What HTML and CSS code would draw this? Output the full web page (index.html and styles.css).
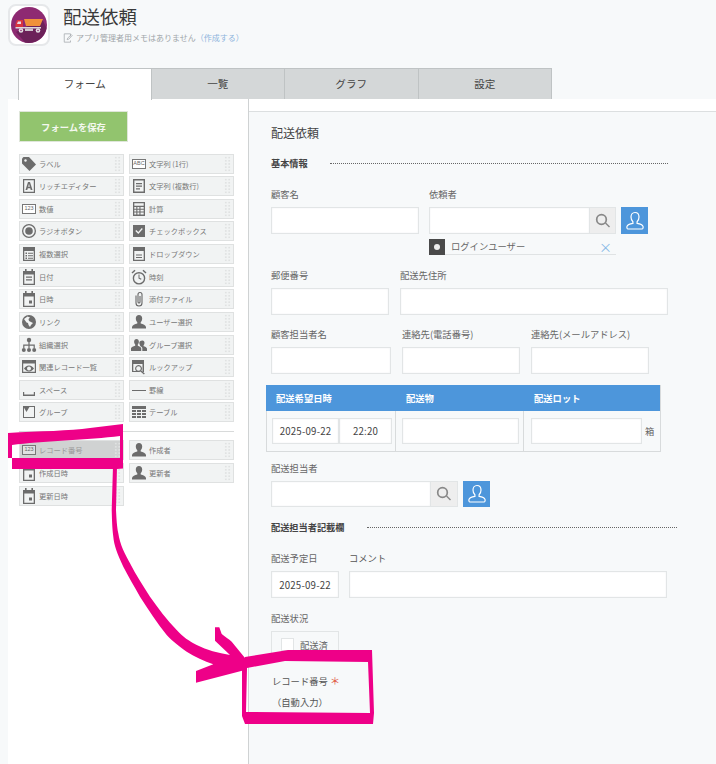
FILE: index.html
```html
<!DOCTYPE html>
<html lang="ja">
<head>
<meta charset="utf-8">
<title>配送依頼</title>
<link rel="stylesheet" href="styles.css">
</head>
<body>
<svg class="defs" width="0" height="0" aria-hidden="true">
  <defs>
    <symbol id="i-tag" viewBox="0 0 16 16"><path d="M1 2.500 2.500 1H8l7 7.500-6.500 6.500L1 7.500Z"/><circle cx="4.500" cy="4.500" r="1.200" fill="#f1f3f3"/></symbol>
    <symbol id="i-rich" viewBox="0 0 16 16"><path fill-rule="evenodd" d="M2 1h12v14H2Zm1.200 1.200v11.600h9.600V2.200Z"/><path d="M7 4h2l2.500 8H9.700l-.5-1.700H6.800L6.300 12H4.500Zm1 1.800-.8 3h1.600Z"/></symbol>
    <symbol id="i-text" viewBox="0 0 16 16"><path fill-rule="evenodd" d="M2 1h12v14H2Zm1.400 1.400v11.200h9.200V2.400Z"/><path d="M5 5h6v1.200H5Zm0 2.600h6v1.200H5Zm0 2.600h4v1.200H5Z"/></symbol>
    <symbol id="i-calc" viewBox="0 0 16 16"><path fill-rule="evenodd" d="M2 1h12v14H2Zm1.300 1.300v2.400h9.400V2.300ZM3.300 6v1.800h2V6Zm3.100 0v1.800h2V6Zm3.100 0v1.800h3.200V6ZM3.300 8.800v1.800h2V8.800Zm3.100 0v1.800h2V8.800Zm3.100 0v1.800h3.200V8.800ZM3.300 11.600v2h2v-2Zm3.100 0v2h2v-2Zm3.100 0v2h3.200v-2Z"/></symbol>
    <symbol id="i-radio" viewBox="0 0 16 16"><path fill-rule="evenodd" d="M8 1a7 7 0 1 1 0 14A7 7 0 0 1 8 1Zm0 1.300a5.700 5.700 0 1 0 0 11.400A5.700 5.700 0 0 0 8 2.300Z"/><circle cx="8" cy="8" r="3.800"/></symbol>
    <symbol id="i-check" viewBox="0 0 16 16"><path d="M2 2h12v12H2Z"/><path d="m4.300 8 1-1 2 2 3.500-4 1 1-4.500 5Z" fill="#f1f3f3"/></symbol>
    <symbol id="i-multi" viewBox="0 0 16 16"><path fill-rule="evenodd" d="M2 1h12v14H2Zm1.300 4v8.700h9.400V5Z"/><path d="M4.500 6.500H6V8H4.500ZM7 6.700h5v1H7ZM4.500 9H6v1.500H4.500ZM7 9.200h5v1H7ZM4.500 11.500H6V13H4.500ZM7 11.700h5v1H7Z"/></symbol>
    <symbol id="i-drop" viewBox="0 0 16 16"><path fill-rule="evenodd" d="M2 1h12v14H2Zm1.300 4v8.700h9.400V5Z"/><path d="M5 8.500h6v1H5Zm0 2.500h6v1H5Z"/></symbol>
    <symbol id="i-date" viewBox="0 0 16 16"><path fill-rule="evenodd" d="M4 0h1.600v2h4.800V0H12v2h2v14H2V2h2Zm-.7 5.500v9.200h9.400V5.500Z"/><path d="M5 7.500h6v1.200H5Zm0 2.700h6v1.200H5Z"/></symbol>
    <symbol id="i-datetime" viewBox="0 0 16 16"><path fill-rule="evenodd" d="M4 0h1.600v2h4.800V0H12v2h2v14H2V2h2Zm-.7 5.500v9.200h9.400V5.500Z"/><path d="M8 9.500h3v3H8Z"/></symbol>
    <symbol id="i-clock" viewBox="0 0 16 16"><path fill-rule="evenodd" d="M8 3a6.300 6.300 0 1 1 0 12.600A6.300 6.300 0 0 1 8 3Zm0 1.400a4.900 4.900 0 1 0 0 9.800 4.900 4.900 0 0 0 0-9.800Z"/><path d="M7.500 5.500h1v3.300l2 1-.5 1-2.500-1.300ZM.5 3.500 3.500.8l1 1-3 2.800Zm15 0L12.500.8l-1 1 3 2.800Z"/></symbol>
    <symbol id="i-clip" viewBox="0 0 16 16"><path fill="none" stroke="#666" stroke-width="1.100" d="M5 4.500V12a3 3 0 0 0 6 0V3.500a2 2 0 0 0-4 0V11a1 1 0 0 0 2 0V5"/></symbol>
    <symbol id="i-globe" viewBox="0 0 16 16"><path fill-rule="evenodd" d="M8 1a7 7 0 1 1 0 14A7 7 0 0 1 8 1ZM3 5l2.500 3.500L7 9l.5 2L9 13l1-2 2-2-2-1-2-1-.5-2L9 3.500 6.500 2.500Z"/></symbol>
    <symbol id="i-user" viewBox="0 0 16 16"><path d="M8 1c2 0 3.200 1.500 3.200 3.500 0 1.500-.7 3-1.500 3.700v1.400c2.300.5 5 1.500 5.300 3.400v1.500H1v-1.500c.3-1.900 3-2.900 5.300-3.400V8.200C5.500 7.500 4.800 6 4.800 4.500 4.800 2.500 6 1 8 1Z"/></symbol>
    <symbol id="i-org" viewBox="0 0 16 16"><circle cx="8" cy="3" r="2.200"/><circle cx="2.800" cy="13" r="2"/><circle cx="8" cy="13" r="2"/><circle cx="13.200" cy="13" r="2"/><path d="M7.400 5h1.200v2.500h5.200V11h-1.200V8.700H8.600V11H7.400V8.700H3.400V11H2.200V7.500h5.200Z"/></symbol>
    <symbol id="i-group" viewBox="0 0 16 16"><path d="M5.500 2c1.500 0 2.400 1.200 2.400 2.800 0 1.100-.5 2.200-1.100 2.800v1.100c1.500.4 3.200 1.200 3.400 2.600V14H0v-2.700c.2-1.400 2.300-2.200 4.200-2.600V7.600c-.6-.6-1.100-1.700-1.100-2.800C3.100 3.200 4 2 5.500 2Z"/><path d="M11.500 3.500c1.300 0 2 1 2 2.400 0 1-.4 1.800-.9 2.300v1c1.400.3 3 1 3.400 2.300V14h-4.700v-2.800c0-1-1.100-1.800-2.200-2.300v-.7c-.5-.5-.8-1.400-.8-2.300 0-1.400.9-2.400 3.200-2.400Z"/></symbol>
    <symbol id="i-rel" viewBox="0 0 16 16"><path fill-rule="evenodd" d="M1 1h14v13H1Zm1.200 3.500v8.300h11.600V4.500Z"/><path fill-rule="evenodd" d="M8 6.500c2.300 0 4 1.500 5 3-1 1.500-2.700 3-5 3s-4-1.500-5-3c1-1.500 2.700-3 5-3Zm0 1a2 2 0 1 0 0 4 2 2 0 0 0 0-4Z"/></symbol>
    <symbol id="i-look" viewBox="0 0 16 16"><path d="M1 1h12v12h-1.500V5H2.300v7H7v1H1Z"/><path fill-rule="evenodd" d="M7.500 6a3.500 3.500 0 0 1 2.800 5.600l3.500 3-.9 1-3.500-3.100A3.500 3.500 0 1 1 7.500 6Zm0 1.200a2.300 2.300 0 1 0 0 4.600 2.300 2.300 0 0 0 0-4.600Z"/></symbol>
    <symbol id="i-space" viewBox="0 0 16 16"><path d="M2 10h1.200v2.500h9.600V10H14v4H2Z"/></symbol>
    <symbol id="i-line" viewBox="0 0 16 16"><path d="M1 8h14v1H1Z"/></symbol>
    <symbol id="i-box" viewBox="0 0 16 16"><path fill-rule="evenodd" d="M2 2h12v12H2Zm1 1v10h10V3Z"/><path d="M2 2h7L5.500 8Z"/></symbol>
    <symbol id="i-table" viewBox="0 0 16 16"><path d="M1 2h14v3H1Z"/><path d="M1 6h4v2H1Zm5 0h4v2H6Zm5 0h4v2h-4ZM1 9h4v2H1Zm5 0h4v2H6Zm5 0h4v2h-4ZM1 12h4v2H1Zm5 0h4v2H6Zm5 0h4v2h-4Z"/></symbol>
    <symbol id="i-search" viewBox="0 0 16 16"><circle cx="6.500" cy="6.500" r="4.800" fill="none" stroke="#888" stroke-width="1.700"/><path d="m10 10.400 1-1 4 4.100-1 1Z" fill="#888"/></symbol>
    <symbol id="i-outline" viewBox="0 0 20 20"><path fill="none" stroke="#fff" stroke-width="1.200" d="M10 1.500c2.600 0 4 2 4 4.600 0 2-.9 3.800-1.900 4.700v1.600c2.500.4 5.300 1.200 5.900 3 .3 1 0 2.600-1 2.600H3c-1 0-1.300-1.600-1-2.600.6-1.800 3.400-2.600 5.900-3v-1.600C6.900 9.900 6 8.100 6 6.100c0-2.600 1.400-4.600 4-4.600Z"/></symbol>
  </defs>
</svg>

<header class="head">
  <div class="app-icon">
    <svg viewBox="0 0 36 36" width="36" height="36">
      <circle cx="18" cy="18" r="18" fill="#8e2a72"/>
      <path d="M31 12 35.500 21A18 18 0 0 1 14 35.500L5 25Z" fill="#6c2159"/>
      <path d="M13 12H32L29 19H15Z" fill="#f0913a"/>
      <path d="M6 13h6v7H4.500v-3Z" fill="#d9343f"/>
      <path d="M7 14.500h3V17H6Z" fill="#e8d9e4"/>
      <path d="M4.500 20H30v1.500H4.500Z" fill="#ddd8dc"/>
      <path d="M14 21.500h8V24h-8Z" fill="#cfc7cd"/>
      <circle cx="10" cy="23.500" r="2.300" fill="#e2dee1"/>
      <circle cx="27" cy="23.500" r="2.300" fill="#e2dee1"/>
      <circle cx="10" cy="23.500" r=".8" fill="#8e2a72"/>
      <circle cx="27" cy="23.500" r=".8" fill="#8e2a72"/>
    </svg>
  </div>
  <div class="head-text">
    <h1 class="app-name">配送依頼</h1>
    <p class="memo">
      <svg class="memo-icon" viewBox="0 0 12 12" width="10" height="10"><path fill="none" stroke="#a9aeb2" d="M9 4V1H1.500v10H9V9"/><path fill="none" stroke="#a9aeb2" d="m5 8 .5-1.800L10 2l1 1-4.200 4.500Z"/></svg>
      <span>アプリ管理者用メモはありません<span class="memo-link">（作成する）</span></span>
    </p>
  </div>
</header>

<nav class="tabs">
  <div class="tab tab-active">フォーム</div>
  <div class="tab">一覧</div>
  <div class="tab">グラフ</div>
  <div class="tab">設定</div>
</nav>

<main class="panel">
  <aside class="side">
    <button class="save">フォームを保存</button>
    <div class="palette">
      <div class="item"><svg class="ic"><use href="#i-tag"/></svg><span>ラベル</span><i class="grip"></i></div>
      <div class="item"><span class="ic-box ic-abc">ABC</span><span>文字列 (1行)</span><i class="grip"></i></div>
      <div class="item"><svg class="ic"><use href="#i-rich"/></svg><span>リッチエディター</span><i class="grip"></i></div>
      <div class="item"><svg class="ic"><use href="#i-text"/></svg><span>文字列 (複数行)</span><i class="grip"></i></div>
      <div class="item"><span class="ic-box">123</span><span>数値</span><i class="grip"></i></div>
      <div class="item"><svg class="ic"><use href="#i-calc"/></svg><span>計算</span><i class="grip"></i></div>
      <div class="item"><svg class="ic"><use href="#i-radio"/></svg><span>ラジオボタン</span><i class="grip"></i></div>
      <div class="item"><svg class="ic"><use href="#i-check"/></svg><span>チェックボックス</span><i class="grip"></i></div>
      <div class="item"><svg class="ic"><use href="#i-multi"/></svg><span>複数選択</span><i class="grip"></i></div>
      <div class="item"><svg class="ic"><use href="#i-drop"/></svg><span>ドロップダウン</span><i class="grip"></i></div>
      <div class="item"><svg class="ic"><use href="#i-date"/></svg><span>日付</span><i class="grip"></i></div>
      <div class="item"><svg class="ic"><use href="#i-clock"/></svg><span>時刻</span><i class="grip"></i></div>
      <div class="item"><svg class="ic"><use href="#i-datetime"/></svg><span>日時</span><i class="grip"></i></div>
      <div class="item"><svg class="ic"><use href="#i-clip"/></svg><span>添付ファイル</span><i class="grip"></i></div>
      <div class="item"><svg class="ic"><use href="#i-globe"/></svg><span>リンク</span><i class="grip"></i></div>
      <div class="item"><svg class="ic"><use href="#i-user"/></svg><span>ユーザー選択</span><i class="grip"></i></div>
      <div class="item"><svg class="ic"><use href="#i-org"/></svg><span>組織選択</span><i class="grip"></i></div>
      <div class="item"><svg class="ic"><use href="#i-group"/></svg><span>グループ選択</span><i class="grip"></i></div>
      <div class="item"><svg class="ic"><use href="#i-rel"/></svg><span>関連レコード一覧</span><i class="grip"></i></div>
      <div class="item"><svg class="ic"><use href="#i-look"/></svg><span>ルックアップ</span><i class="grip"></i></div>
      <div class="item"><svg class="ic"><use href="#i-space"/></svg><span>スペース</span><i class="grip"></i></div>
      <div class="item"><svg class="ic"><use href="#i-line"/></svg><span>罫線</span><i class="grip"></i></div>
      <div class="item"><svg class="ic"><use href="#i-box"/></svg><span>グループ</span><i class="grip"></i></div>
      <div class="item"><svg class="ic"><use href="#i-table"/></svg><span>テーブル</span><i class="grip"></i></div>
    </div>
    <hr class="side-rule">
    <div class="palette palette-b">
      <div class="item item-used"><span class="ic-box">123</span><span>レコード番号</span><i class="grip"></i></div>
      <div class="item"><svg class="ic"><use href="#i-user"/></svg><span>作成者</span><i class="grip"></i></div>
      <div class="item"><svg class="ic"><use href="#i-datetime"/></svg><span>作成日時</span><i class="grip"></i></div>
      <div class="item"><svg class="ic"><use href="#i-user"/></svg><span>更新者</span><i class="grip"></i></div>
      <div class="item"><svg class="ic"><use href="#i-datetime"/></svg><span>更新日時</span><i class="grip"></i></div>
    </div>
  </aside>

  <section class="form">
    <h2 class="form-title">配送依頼</h2>

    <div class="sec sec-a"><b>基本情報</b><i class="dots"></i></div>

    <div class="row row-1">
      <div class="field"><label>顧客名</label><div class="input w148"></div></div>
      <div class="field">
        <label>依頼者</label>
        <div class="picker">
          <div class="input w161"></div>
          <div class="search"><svg class="search-ic"><use href="#i-search"/></svg></div>
          <div class="user-btn"><svg class="user-ic"><use href="#i-outline"/></svg></div>
        </div>
        <div class="login">
          <span class="login-ic"><i></i></span>
          <span class="login-name">ログインユーザー</span>
          <span class="login-x">×</span>
        </div>
      </div>
    </div>

    <div class="row row-2">
      <div class="field"><label>郵便番号</label><div class="input w118"></div></div>
      <div class="field"><label>配送先住所</label><div class="input w268"></div></div>
    </div>

    <div class="row row-3">
      <div class="field"><label>顧客担当者名</label><div class="input w120"></div></div>
      <div class="field"><label>連絡先(電話番号)</label><div class="input w118"></div></div>
      <div class="field"><label>連絡先(メールアドレス)</label><div class="input w118"></div></div>
    </div>

    <div class="table">
      <div class="th">配送希望日時</div>
      <div class="th">配送物</div>
      <div class="th">配送ロット</div>
      <div class="td td-date"><div class="input val w67">2025-09-22</div><div class="input val w53">22:20</div></div>
      <div class="td td-item"><div class="input in26 w117"></div></div>
      <div class="td td-lot"><div class="input in26 w111"></div><span class="unit">箱</span></div>
    </div>

    <div class="row row-4">
      <div class="field">
        <label>配送担当者</label>
        <div class="picker">
          <div class="input in26 w160"></div>
          <div class="search in26"><svg class="search-ic"><use href="#i-search"/></svg></div>
          <div class="user-btn in26"><svg class="user-ic"><use href="#i-outline"/></svg></div>
        </div>
      </div>
    </div>

    <div class="sec sec-b"><b>配送担当者記載欄</b><i class="dots"></i></div>

    <div class="row row-5">
      <div class="field"><label>配送予定日</label><div class="input val w68">2025-09-22</div></div>
      <div class="field"><label class="label-strong">コメント</label><div class="input w318"></div></div>
    </div>

    <div class="row row-6">
      <div class="field">
        <label>配送状況</label>
        <div class="check-box"><span class="check"></span><span>配送済</span></div>
      </div>
    </div>

    <div class="rec">
      <div class="rec-label">レコード番号 <span class="req">＊</span></div>
      <div class="rec-val">（自動入力）</div>
    </div>
  </section>
</main>

<svg class="marks" width="716" height="764" viewBox="0 0 716 764" aria-hidden="true">
  <path fill-rule="evenodd" d="M8 433C40 431 70 431 90 428L123 424V468.500L117 469H12V458H8ZM12 445V458H120V436C90 440 40 441 12 445Z"/>
  <path d="M113 466H117L116 510C116.500 520 117 527 118.300 533.300 120 545 125 554 130 563.300 136 575 143 586 150 596.700 158 608 167 620 176.700 630 183 637 189 641 196.700 645 207 650 218 653 230 655L215 640.700V627.300H219.300L221.700 634C225 637 229 639 231.700 641.700L245 658V670L196 682.700V671L213.300 664.300C204 661 195 657 186.700 651.700 179 646 173 642 166.700 635 157 623 148 609 140 596.700 134 586 128 576 123.300 566.700 117 553 114 545 113.300 536.700 112 526 112 518 111.700 510Z"/>
  <path fill-rule="evenodd" d="M242 670 245 657 288 650H372L374 713 373 724H245L242 716ZM247 668 246 712 370 713 368 662 285 661Z"/>
</svg>
</body>
</html>
```

FILE: styles.css
```css
* { box-sizing: border-box; }
html, body { margin: 0; padding: 0; }
body {
  width: 716px;
  height: 764px;
  overflow: hidden;
  position: relative;
  background: #f7f9fa;
  color: #666;
  font-family: "Noto Sans CJK JP", "Noto Sans", sans-serif;
  font-size: 9.3px;
}
.defs { position: absolute; }
.head { display: flex; height: 68px; padding: 4px 0 0 8px; }
.app-icon {
  width: 42px;
  height: 42px;
  display: flex;
  align-items: center;
  justify-content: center;
  background: #fff;
  border: 2px solid #e6e8ea;
  border-radius: 8px;
}
.head-text { margin-left: 13px; }
.app-name {
  margin: 1px 0 0;
  font-size: 18.5px;
  line-height: 22px;
  font-weight: 400;
  color: #3a3a3a;
}
.memo {
  margin: 5px 0 0;
  display: flex;
  align-items: center;
  gap: 3px;
  font-size: 8px;
  line-height: 12px;
  color: #a0a5a9;
}
.memo-link { color: #8db4dc; }
.tabs { display: flex; height: 32px; padding-left: 18px; }
.tab {
  width: 133.5px;
  height: 31px;
  padding-bottom: 2px;
  display: flex;
  align-items: center;
  justify-content: center;
  background: #d4d7d8;
  border: 1px solid #bfc3c4;
  border-bottom: 0;
  border-left: 0;
  font-size: 10.6px;
  color: #444;
}
.tab-active {
  background: #fff;
  height: 32px;
  border-left: 1px solid #c4c7c8;
  position: relative;
  z-index: 1;
}
.panel {
  display: flex;
  height: 665px;
  margin-left: 8px;
  margin-top: -1px;
  background: #fff;
}
.side { width: 241px; padding: 12px 0 0 11px; border-right: 1px solid #cfd2d3; flex: none; }
.save {
  display: block;
  width: 109px;
  height: 31px;
  margin: 0 0 11.5px;
  padding: 0;
  background: #92c46e;
  border: 1px solid #dfe6da;
  color: #f4f8ef;
  font: 700 9.3px "Noto Sans CJK JP", sans-serif;
}
.palette {
  display: grid;
  grid-template-columns: 105px 105px;
  column-gap: 5px;
  row-gap: 2.64px;
}
.palette-b { row-gap: 3px; }
.item {
  height: 20px;
  display: flex;
  align-items: center;
  gap: 2px;
  padding-left: 1px;
  background: #f1f3f3;
  border: 1px solid #dfe1e1;
  font-size: 7.25px;
  color: #777;
  white-space: nowrap;
}
.item-used { background: #d0d2d2; color: #999; }
.ic { width: 16px; height: 16px; flex: none; fill: #6c6c6c; }
.ic-box {
  width: 14px;
  height: 10px;
  margin: 0 1px;
  flex: none;
  display: flex;
  align-items: center;
  justify-content: center;
  border: 1px solid #777;
  background: #fff;
  font: 5.5px/1 "Liberation Sans", sans-serif;
  color: #666;
}
.item-used .ic-box { background: #e0e2e2; }
.grip {
  width: 7px;
  height: 16px;
  margin-left: auto;
  margin-right: 2px;
  background-image: radial-gradient(circle, #e0e2e2 0.9px, transparent 1.1px);
  background-size: 3.5px 3.2px;
}
.side-rule {
  width: 215px;
  height: 1px;
  margin: 9px 0 7.5px;
  border: 0;
  background: #d8dada;
}

.form { flex: 1; padding: 13px 0 0 22px; background: #f7f9fa; border-top: 1px solid #dcdfe0; margin-top: 12px; }
.form-title { margin: 0; font-size: 12px; line-height: 16px; font-weight: 400; color: #444; }
.sec { display: flex; align-items: center; height: 14px; color: #444; }
.sec b { font-weight: 700; font-size: 9.2px; }
.dots { height: 0; margin-left: 22px; border-top: 1px dotted #666; }
.sec-a { margin-top: 15px; }
.sec-a .dots { width: 338px; }
.sec-b { margin-top: 13px; }
.sec-b .dots { width: 310px; }

.row { display: flex; }
.row-1 { margin-top: 18px; gap: 10px; }
.row-2 { margin-top: 14px; gap: 11px; }
.row-3 { margin-top: 13px; gap: 11px; }
.row-4 { margin-top: 10px; }
.row-5 { margin-top: 18px; gap: 10px; }
.row-6 { margin-top: 14px; }
.field label { display: block; height: 13px; margin-bottom: 6px; line-height: 13px; color: #666; white-space: nowrap; }
.field .label-strong { color: #555; }
.input {
  height: 27px;
  background: #fff;
  border: 1px solid #e2e5e6;
  box-shadow: inset 0 0 2px #eef0f1;
  flex: none;
}
.in26 { height: 26px; }
.val {
  display: flex;
  align-items: center;
  justify-content: center;
  font-size: 9.7px;
  letter-spacing: .2px;
  color: #444;
}
.w53 { width: 53px; }
.w67 { width: 67px; }
.w68 { width: 68px; }
.w111 { width: 111px; }
.w117 { width: 117px; }
.w118 { width: 118px; }
.w120 { width: 120px; }
.w148 { width: 148px; }
.w160 { width: 160px; }
.w161 { width: 161px; }
.w268 { width: 268px; }
.w318 { width: 318px; }
.picker { display: flex; }
.search {
  width: 26px;
  height: 27px;
  display: flex;
  align-items: center;
  justify-content: center;
  background: #eee;
  border: 1px solid #e2e5e6;
  border-left: 0;
}
.search.in26 { width: 27px; height: 26px; }
.search-ic { width: 16px; height: 16px; }
.user-btn {
  width: 27px;
  height: 27px;
  margin-left: 5px;
  display: flex;
  align-items: center;
  justify-content: center;
  background: #4d96db;
}
.user-btn.in26 { height: 26px; }
.user-ic { width: 20px; height: 20px; }
.login {
  display: flex;
  align-items: center;
  width: 187px;
  height: 16px;
  margin-top: 5px;
  border-bottom: 1px solid #e0e3e4;
  color: #666;
}
.login-ic {
  width: 16px;
  height: 16px;
  flex: none;
  display: flex;
  align-items: center;
  justify-content: center;
  background: #4a4a4a;
}
.login-ic i { width: 6px; height: 6px; border-radius: 50%; background: #eee; }
.login-name { margin-left: 6px; padding-bottom: 2px; }
.login-x { margin-left: auto; margin-right: 4px; font-size: 13px; line-height: 16px; color: #86b8e6; }

.table {
  display: grid;
  grid-template-columns: 130px 128px 1fr;
  width: 395px;
  margin: 11px 0 0 -5px;
  border-bottom: 1px solid #d8dbdc;
  border-right: 1px solid #d8dbdc;
}
.th {
  height: 26px;
  padding-left: 10px;
  background: #4d96db;
  color: #fff;
  font-weight: 700;
  line-height: 26px;
}
.td { display: flex; align-items: center; height: 40px; border-right: 1px solid #d8dbdc; }
.td-date { padding-left: 5px; border-left: 1px solid #d8dbdc; }
.td-item { padding-left: 6px; }
.td-lot { padding-left: 7px; border-right: 0; }
.td-date .input { height: 26px; }
.unit { margin-left: 3px; color: #666; }

.check-box {
  display: flex;
  align-items: center;
  width: 68px;
  height: 27px;
  padding-left: 9px;
  gap: 6px;
  border: 1px solid #e2e5e6;
}
.check { width: 13px; height: 13px; background: #fff; border: 1px solid #e2e5e6; }
.rec { margin: 16px 0 0 1px; color: #555; }
.rec-label { line-height: 14px; }
.rec-val { margin-top: 7px; line-height: 14px; }
.req { color: #e0553f; font-size: 10px; line-height: 10px; }
.marks { position: absolute; left: 0; top: 0; z-index: 2; fill: #ee0088; }
```
